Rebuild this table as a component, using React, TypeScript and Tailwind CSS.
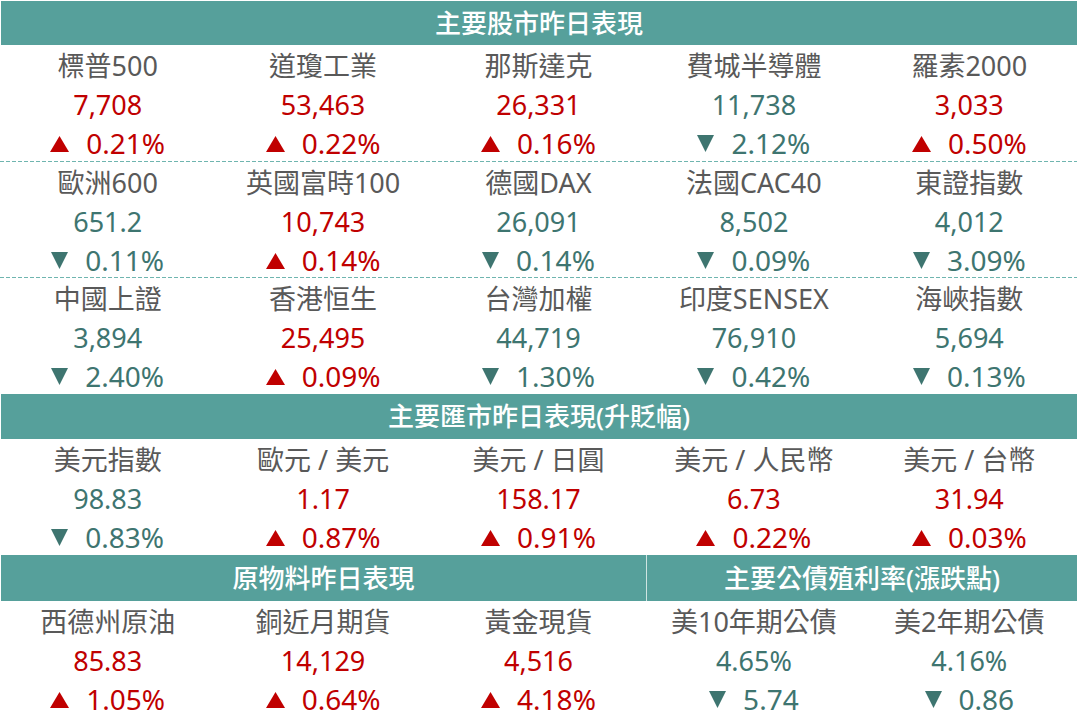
import React from "react"

type Item = { name: string; value: string; change: string; up: boolean }

const RED = "text-[#c00000]"
const GREEN = "text-[#3e7570]"

const STOCK_ROWS: Item[][] = [
  [
    { name: "標普500", value: "7,708", change: "0.21%", up: true },
    { name: "道瓊工業", value: "53,463", change: "0.22%", up: true },
    { name: "那斯達克", value: "26,331", change: "0.16%", up: true },
    { name: "費城半導體", value: "11,738", change: "2.12%", up: false },
    { name: "羅素2000", value: "3,033", change: "0.50%", up: true },
  ],
  [
    { name: "歐洲600", value: "651.2", change: "0.11%", up: false },
    { name: "英國富時100", value: "10,743", change: "0.14%", up: true },
    { name: "德國DAX", value: "26,091", change: "0.14%", up: false },
    { name: "法國CAC40", value: "8,502", change: "0.09%", up: false },
    { name: "東證指數", value: "4,012", change: "3.09%", up: false },
  ],
  [
    { name: "中國上證", value: "3,894", change: "2.40%", up: false },
    { name: "香港恒生", value: "25,495", change: "0.09%", up: true },
    { name: "台灣加權", value: "44,719", change: "1.30%", up: false },
    { name: "印度SENSEX", value: "76,910", change: "0.42%", up: false },
    { name: "海峽指數", value: "5,694", change: "0.13%", up: false },
  ],
]

const FX: Item[] = [
  { name: "美元指數", value: "98.83", change: "0.83%", up: false },
  { name: "歐元 / 美元", value: "1.17", change: "0.87%", up: true },
  { name: "美元 / 日圓", value: "158.17", change: "0.91%", up: true },
  { name: "美元 / 人民幣", value: "6.73", change: "0.22%", up: true },
  { name: "美元 / 台幣", value: "31.94", change: "0.03%", up: true },
]

const COMMODITIES: Item[] = [
  { name: "西德州原油", value: "85.83", change: "1.05%", up: true },
  { name: "銅近月期貨", value: "14,129", change: "0.64%", up: true },
  { name: "黃金現貨", value: "4,516", change: "4.18%", up: true },
]

const BONDS: Item[] = [
  { name: "美10年期公債", value: "4.65%", change: "5.74", up: false },
  { name: "美2年期公債", value: "4.16%", change: "0.86", up: false },
]

function Arrow({ up }: { up: boolean }) {
  return up ? (
    <svg width="19" height="16" viewBox="0 0 19 16" className="shrink-0">
      <polygon points="9.5,0 19,16 0,16" fill="#c00000" />
    </svg>
  ) : (
    <svg width="17" height="17" viewBox="0 0 17 17" className="shrink-0">
      <polygon points="0,0 17,0 8.5,17" fill="#3e7570" />
    </svg>
  )
}

function Cell({ item }: { item: Item }) {
  const color = item.up ? RED : GREEN
  return (
    <div className="flex flex-col items-center pt-[2px] leading-[38.7px]">
      <span className="text-[27px] text-[#595959]">{item.name}</span>
      <span className={`text-[27px] ${color}`}>{item.value}</span>
      <span className={`flex items-center gap-[17px] text-[28px] ${color}`}>
        <Arrow up={item.up} />
        {item.change}
      </span>
    </div>
  )
}

function Header({ children, className = "" }: { children: React.ReactNode; className?: string }) {
  return (
    <div
      className={`flex items-center justify-center bg-[#56a09b] text-[26px] font-medium text-white ${className}`}
    >
      {children}
    </div>
  )
}

// dashed separator between stock rows
function Dashed() {
  return (
    <div className="h-px bg-[repeating-linear-gradient(to_right,#6fb5af_0_4px,transparent_4px_6px)]" />
  )
}

export default function App() {
  return (
    <div
      className="w-[1077px] h-[718px] overflow-hidden bg-white pt-px"
      style={{ fontFamily: '"Noto Sans", "Noto Sans CJK TC", sans-serif' }}
    >
      <Header className="h-[44px] ml-px">主要股市昨日表現</Header>

      {STOCK_ROWS.map((row, i) => (
        <React.Fragment key={i}>
          <div className={`grid grid-cols-5 ${i === 1 ? "h-[115px]" : "h-[116px]"}`}>
            {row.map((it) => (
              <Cell key={it.name} item={it} />
            ))}
          </div>
          {i < 2 && <Dashed />}
        </React.Fragment>
      ))}

      <Header className="h-[45px] ml-px">主要匯市昨日表現(升貶幅)</Header>
      <div className="grid grid-cols-5 h-[116px]">
        {FX.map((it) => (
          <Cell key={it.name} item={it} />
        ))}
      </div>

      <div className="grid grid-cols-5 h-[46px]">
        <Header className="col-span-3 ml-px">原物料昨日表現</Header>
        <Header className="col-span-2 border-l border-[#cfe4e2]">主要公債殖利率(漲跌點)</Header>
      </div>
      <div className="grid grid-cols-5 h-[116px]">
        {COMMODITIES.map((it) => (
          <Cell key={it.name} item={it} />
        ))}
        {BONDS.map((it) => (
          <Cell key={it.name} item={it} />
        ))}
      </div>
    </div>
  )
}
